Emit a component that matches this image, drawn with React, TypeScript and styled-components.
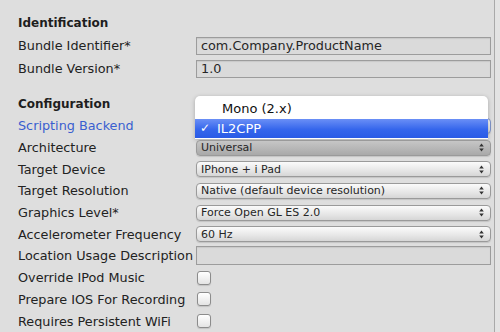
import styled, { createGlobalStyle } from "styled-components";

const GlobalStyle = createGlobalStyle`
  html, body {
    margin: 0;
    padding: 0;
    background: #e3e3e3;
  }
  body {
    font-family: "DejaVu Sans", Verdana, sans-serif;
  }
`;

const Window = styled.div`
  width: 500px;
  height: 332px;
  overflow: hidden;
  display: flex;
  background: #e3e3e3;
`;

const Panel = styled.div`
  width: 495px;
  box-sizing: border-box;
  padding: 12px 4px 0 18px;
  background: #dedede;
  border-right: 1px solid #a9a9a9;
`;

const Section = styled.section<{ $gap?: number }>`
  display: flex;
  flex-direction: column;
  margin-top: ${(p) => p.$gap ?? 0}px;
`;

const Heading = styled.div`
  height: 22px;
  display: flex;
  align-items: center;
  font-weight: bold;
  font-size: 12px;
  color: #1e1e1e;
`;

const Row = styled.div<{ $h: number }>`
  height: ${(p) => p.$h}px;
  display: grid;
  grid-template-columns: 178px 295px;
  align-items: center;
`;

const Label = styled.span<{ $active?: boolean }>`
  font-size: 12.8px;
  color: ${(p) => (p.$active ? "#3a5fd0" : "#222222")};
  white-space: nowrap;
`;

const Cell = styled.div`
  position: relative;
  display: flex;
  align-items: center;
`;

const TextField = styled.div<{ $h?: number }>`
  width: 100%;
  height: ${(p) => p.$h ?? 18}px;
  box-sizing: border-box;
  border: 1px solid #9c9c9c;
  background: #dadada;
  box-shadow: inset 0 1px 1px rgba(0, 0, 0, 0.08);
  padding: 0 4px;
  display: flex;
  align-items: center;
  font-size: 12.8px;
  color: #262626;
`;

const Select = styled.div<{ $dark?: boolean; $focus?: boolean }>`
  width: 100%;
  height: 16px;
  box-sizing: border-box;
  border: 1px solid ${(p) => (p.$focus ? "#7e93c8" : "#9a9a9a")};
  border-radius: 4px;
  background: ${(p) =>
    p.$dark
      ? "linear-gradient(#c6c6c6, #a9a9a9)"
      : "linear-gradient(#fbfbfb, #e6e6e6 60%, #d6d6d6)"};
  box-shadow: 0 1px 1px rgba(0, 0, 0, 0.12);
  padding: 0 6px 0 4px;
  display: flex;
  align-items: center;
  justify-content: space-between;
  font-size: 11px;
  color: #262626;
`;

const Check = styled.div`
  width: 14px;
  height: 14px;
  box-sizing: border-box;
  margin-left: 1px;
  border: 1px solid #8c8c8c;
  border-radius: 3px;
  background: linear-gradient(#ffffff, #e4e4e4);
  box-shadow: 0 1px 1px rgba(0, 0, 0, 0.12);
`;

const Popup = styled.div`
  position: absolute;
  top: -22px;
  left: -1px;
  right: 3px;
  height: 43px;
  background: #ffffff;
  border-radius: 5px 5px 0 0;
  box-shadow: 0 1px 4px rgba(0, 0, 0, 0.25);
  padding-top: 2px;
  box-sizing: border-box;
`;

const MenuItem = styled.div<{ $selected?: boolean }>`
  height: ${(p) => (p.$selected ? 19 : 21)}px;
  display: flex;
  align-items: center;
  padding-left: ${(p) => (p.$selected ? 5 : 27)}px;
  font-size: 13px;
  color: ${(p) => (p.$selected ? "#ffffff" : "#111111")};
  background: ${(p) =>
    p.$selected ? "linear-gradient(#6a8ff6, #3566ec 55%, #2a5be6)" : "transparent"};
`;

const Tick = styled.span`
  width: 17px;
  font-size: 12px;
`;

const Arrows = () => (
  <svg width="5" height="9" viewBox="0 0 5 9">
    <path d="M2.5 0.5 L4.8 3.6 H0.2 Z M2.5 8.5 L4.8 5.4 H0.2 Z" fill="#333" />
  </svg>
);

type Field =
  | { label: string; kind: "select"; value: string; dark?: boolean }
  | { label: string; kind: "text"; value: string }
  | { label: string; kind: "check" };

const config: Field[] = [
  { label: "Architecture", kind: "select", value: "Universal", dark: true },
  { label: "Target Device", kind: "select", value: "IPhone + i Pad" },
  { label: "Target Resolution", kind: "select", value: "Native (default device resolution)" },
  { label: "Graphics Level*", kind: "select", value: "Force Open GL ES 2.0" },
  { label: "Accelerometer Frequency", kind: "select", value: "60 Hz" },
  { label: "Location Usage Description", kind: "text", value: "" },
  { label: "Override IPod Music", kind: "check" },
  { label: "Prepare IOS For Recording", kind: "check" },
  { label: "Requires Persistent WiFi", kind: "check" },
];

const renderControl = (f: Field) => {
  if (f.kind === "check") return <Check />;
  if (f.kind === "text") return <TextField $h={19}>{f.value}</TextField>;
  return (
    <Select $dark={f.dark}>
      <span>{f.value}</span>
      <Arrows />
    </Select>
  );
};

const App = () => {
  return (
    <Window>
      <GlobalStyle />
      <Panel>
        <Section>
          <Heading>Identification</Heading>
          <Row $h={23}>
            <Label>Bundle Identifier*</Label>
            <TextField>com.Company.ProductName</TextField>
          </Row>
          <Row $h={23}>
            <Label>Bundle Version*</Label>
            <TextField>1.0</TextField>
          </Row>
        </Section>

        <Section $gap={13}>
          <Heading>Configuration</Heading>
          <Row $h={21.7}>
            <Label $active>Scripting Backend</Label>
            <Cell>
              {/* open popup menu covers the select */}
              <Select $focus>
                <span />
                <Arrows />
              </Select>
              <Popup>
                <MenuItem>Mono (2.x)</MenuItem>
                <MenuItem $selected>
                  <Tick>✓</Tick>
                  IL2CPP
                </MenuItem>
              </Popup>
            </Cell>
          </Row>
          {config.map((f) => (
            <Row $h={21.7} key={f.label}>
              <Label>{f.label}</Label>
              <Cell>{renderControl(f)}</Cell>
            </Row>
          ))}
        </Section>
      </Panel>
    </Window>
  );
};

export default App;
